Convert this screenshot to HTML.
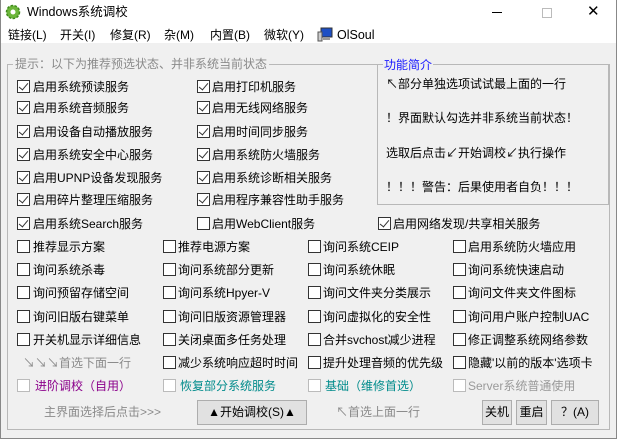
<!DOCTYPE html>
<html><head><meta charset="utf-8"><style>
*{margin:0;padding:0;box-sizing:border-box}
body{width:617px;height:439px;overflow:hidden;background:#f0f0f0;font-family:"Liberation Sans","Noto Sans CJK SC",sans-serif;font-size:12px;color:#000;position:relative}
.a{position:absolute;white-space:nowrap;line-height:14px}
#title{position:absolute;left:0;top:0;width:617px;height:43px;background:#fff}
#frame{position:absolute;left:0;top:0;width:617px;height:439px;border:1px solid #888;border-top:none;pointer-events:none}
.cb{position:absolute;width:13px;height:13px;border:1px solid #333;background:#fff}
.cb.c::after{content:"";position:absolute;left:3px;top:0px;width:4px;height:8px;border:solid #333;border-width:0 1.5px 1.5px 0;transform:rotate(40deg)}
.cb.g{border-color:#bbb}
.box{position:absolute;border:1px solid #b8b8b8}
.btn{position:absolute;border:1px solid #adadad;background:#e1e1e1;text-align:center;line-height:23px;font-size:12px}
</style></head><body>
<div id="title"></div>
<svg class="a" style="left:5px;top:4px" width="16" height="16" viewBox="0 0 16 16"><circle cx="8" cy="8" r="6.5" fill="#6cb63a" stroke="#3f8a1c" stroke-width="1.5" stroke-dasharray="2.5 1.5"/><circle cx="8" cy="8" r="2.5" fill="#fff"/></svg>
<div class="a" style="left:27px;top:5px;font-size:12.5px">Windows系统调校</div>
<div class="a" style="left:492px;top:12px;width:10px;height:1px;background:#000"></div>
<div class="a" style="left:542px;top:8px;width:10px;height:10px;border:1px solid #bbb"></div>
<div class="a" style="left:587px;top:4px;font-size:15px;line-height:16px">✕</div>
<div class="a" style="left:8px;top:28px">链接(L)</div>
<div class="a" style="left:60px;top:28px">开关(I)</div>
<div class="a" style="left:110px;top:28px">修复(R)</div>
<div class="a" style="left:164px;top:28px">杂(M)</div>
<div class="a" style="left:210px;top:28px">内置(B)</div>
<div class="a" style="left:264px;top:28px">微软(Y)</div>
<svg class="a" style="left:317px;top:27px" width="16" height="16" viewBox="0 0 16 16"><rect x="4" y="1" width="11" height="9" fill="#1d4fc4" stroke="#333"/><rect x="1" y="5" width="4" height="9" fill="#ccc" stroke="#555"/><rect x="6" y="11" width="7" height="2" fill="#999"/></svg>
<div class="a" style="left:337px;top:28px;font-size:12.5px">OlSoul</div>

<div class="box" style="left:7px;top:64px;width:603px;height:366px"></div>
<div class="a" style="left:13px;top:57px;background:#f0f0f0;color:#8a8a8a;padding:0 2px">提示：以下为推荐预选状态、并非系统当前状态</div>
<div class="box" style="left:377px;top:64px;width:232px;height:141px"></div>
<div class="a" style="left:383px;top:58px;background:#f0f0f0;color:#1a1aff;padding:0 1px">功能简介</div>
<div class="a" style="left:386px;top:77px">↖部分单独选项试试最上面的一行</div>
<div class="a" style="left:386px;top:111px">！界面默认勾选并非系统当前状态！</div>
<div class="a" style="left:386px;top:146px">选取后点击↙开始调校↙执行操作</div>
<div class="a" style="left:386px;top:180px">！！！警告：后果使用者自负！！！</div>

<!-- two column rows -->
<div class="cb c" style="left:17px;top:80px"></div><div class="a" style="left:33px;top:80px">启用系统预读服务</div>
<div class="cb c" style="left:197px;top:80px"></div><div class="a" style="left:212px;top:80px">启用打印机服务</div>
<div class="cb c" style="left:17px;top:101px"></div><div class="a" style="left:33px;top:101px">启用系统音频服务</div>
<div class="cb c" style="left:197px;top:101px"></div><div class="a" style="left:212px;top:101px">启用无线网络服务</div>
<div class="cb c" style="left:17px;top:125px"></div><div class="a" style="left:33px;top:125px">启用设备自动播放服务</div>
<div class="cb c" style="left:197px;top:125px"></div><div class="a" style="left:212px;top:125px">启用时间同步服务</div>
<div class="cb c" style="left:17px;top:148px"></div><div class="a" style="left:33px;top:148px">启用系统安全中心服务</div>
<div class="cb c" style="left:197px;top:148px"></div><div class="a" style="left:212px;top:148px">启用系统防火墙服务</div>
<div class="cb c" style="left:17px;top:171px"></div><div class="a" style="left:33px;top:171px">启用UPNP设备发现服务</div>
<div class="cb c" style="left:197px;top:171px"></div><div class="a" style="left:212px;top:171px">启用系统诊断相关服务</div>
<div class="cb c" style="left:17px;top:193px"></div><div class="a" style="left:33px;top:193px">启用碎片整理压缩服务</div>
<div class="cb c" style="left:197px;top:193px"></div><div class="a" style="left:212px;top:193px">启用程序兼容性助手服务</div>
<div class="cb c" style="left:17px;top:217px"></div><div class="a" style="left:33px;top:217px">启用系统Search服务</div>
<div class="cb" style="left:197px;top:217px"></div><div class="a" style="left:212px;top:217px">启用WebClient服务</div>
<div class="cb c" style="left:378px;top:217px"></div><div class="a" style="left:393px;top:217px">启用网络发现/共享相关服务</div>

<!-- four column rows -->
<div class="cb" style="left:17px;top:240px"></div><div class="a" style="left:33px;top:240px">推荐显示方案</div>
<div class="cb" style="left:163px;top:240px"></div><div class="a" style="left:178px;top:240px">推荐电源方案</div>
<div class="cb" style="left:308px;top:240px"></div><div class="a" style="left:323px;top:240px">询问系统CEIP</div>
<div class="cb" style="left:453px;top:240px"></div><div class="a" style="left:468px;top:240px">启用系统防火墙应用</div>
<div class="cb" style="left:17px;top:263px"></div><div class="a" style="left:33px;top:263px">询问系统杀毒</div>
<div class="cb" style="left:163px;top:263px"></div><div class="a" style="left:178px;top:263px">询问系统部分更新</div>
<div class="cb" style="left:308px;top:263px"></div><div class="a" style="left:323px;top:263px">询问系统休眠</div>
<div class="cb" style="left:453px;top:263px"></div><div class="a" style="left:468px;top:263px">询问系统快速启动</div>
<div class="cb" style="left:17px;top:286px"></div><div class="a" style="left:33px;top:286px">询问预留存储空间</div>
<div class="cb" style="left:163px;top:286px"></div><div class="a" style="left:178px;top:286px">询问系统Hpyer-V</div>
<div class="cb" style="left:308px;top:286px"></div><div class="a" style="left:323px;top:286px">询问文件夹分类展示</div>
<div class="cb" style="left:453px;top:286px"></div><div class="a" style="left:468px;top:286px">询问文件夹文件图标</div>
<div class="cb" style="left:17px;top:310px"></div><div class="a" style="left:33px;top:310px">询问旧版右键菜单</div>
<div class="cb" style="left:163px;top:310px"></div><div class="a" style="left:178px;top:310px">询问旧版资源管理器</div>
<div class="cb" style="left:308px;top:310px"></div><div class="a" style="left:323px;top:310px">询问虚拟化的安全性</div>
<div class="cb" style="left:453px;top:310px"></div><div class="a" style="left:468px;top:310px">询问用户账户控制UAC</div>
<div class="cb" style="left:17px;top:333px"></div><div class="a" style="left:33px;top:333px">开关机显示详细信息</div>
<div class="cb" style="left:163px;top:333px"></div><div class="a" style="left:178px;top:333px">关闭桌面多任务处理</div>
<div class="cb" style="left:308px;top:333px"></div><div class="a" style="left:323px;top:333px">合并svchost减少进程</div>
<div class="cb" style="left:453px;top:333px"></div><div class="a" style="left:468px;top:333px">修正调整系统网络参数</div>
<div class="a" style="left:23px;top:356px;color:#8a8a8a">↘↘↘首选下面一行</div>
<div class="cb" style="left:163px;top:356px"></div><div class="a" style="left:178px;top:356px">减少系统响应超时时间</div>
<div class="cb" style="left:308px;top:356px"></div><div class="a" style="left:323px;top:356px">提升处理音频的优先级</div>
<div class="cb" style="left:453px;top:356px"></div><div class="a" style="left:468px;top:356px">隐藏'以前的版本'选项卡</div>
<div class="cb g" style="left:17px;top:379px"></div><div class="a" style="left:35px;top:379px;color:#8b008b">进阶调校（自用）</div>
<div class="cb g" style="left:163px;top:379px"></div><div class="a" style="left:180px;top:379px;color:#008b8b">恢复部分系统服务</div>
<div class="cb g" style="left:308px;top:379px"></div><div class="a" style="left:325px;top:379px;color:#008b8b">基础（维修首选）</div>
<div class="cb g" style="left:453px;top:379px"></div><div class="a" style="left:468px;top:379px;color:#9a9a9a">Server系统普通使用</div>

<div class="a" style="left:44px;top:405px;color:#8a8a8a">主界面选择后点击&gt;&gt;&gt;</div>
<div class="btn" style="left:197px;top:400px;width:110px;height:25px">▲开始调校(S)▲</div>
<div class="a" style="left:336px;top:405px;color:#8a8a8a">↖首选上面一行</div>
<div class="btn" style="left:482px;top:400px;width:30px;height:25px">关机</div>
<div class="btn" style="left:516px;top:400px;width:31px;height:25px">重启</div>
<div class="btn" style="left:551px;top:400px;width:48px;height:25px">？(A)</div>
<div id="frame"></div>
</body></html>
